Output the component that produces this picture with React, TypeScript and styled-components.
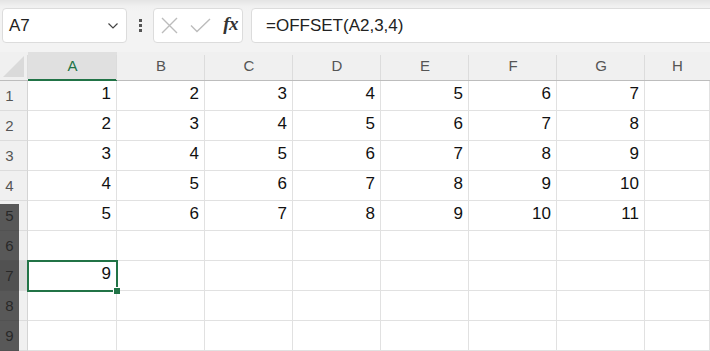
import React from 'react'
import styled, { createGlobalStyle, css } from 'styled-components'

const GlobalStyle = createGlobalStyle`
    html, body {
        margin: 0;
        padding: 0;
        background: #ffffff;
        overflow: hidden;
    }
    body {
        font-family: "Liberation Sans", Arial, sans-serif;
    }
`

const COLS = ['A', 'B', 'C', 'D', 'E', 'F', 'G', 'H']
const ROWS = 9
const SELECTED_COL = 0
const SELECTED_ROW = 7

const data: (number | null)[][] = [
    [1, 2, 3, 4, 5, 6, 7],
    [2, 3, 4, 5, 6, 7, 8],
    [3, 4, 5, 6, 7, 8, 9],
    [4, 5, 6, 7, 8, 9, 10],
    [5, 6, 7, 8, 9, 10, 11],
    [],
    [9],
    [],
    [],
]

const Page = styled.div`
    width: 710px;
    height: 351px;
    display: flex;
    flex-direction: column;
    overflow: hidden;
    position: relative;
    background: #f3f3f3;
`

const Toolbar = styled.div`
    height: 52px;
    box-sizing: border-box;
    padding: 8px 0 9px 2px;
    display: flex;
    align-items: stretch;
    background: linear-gradient(#e4e4e4 0px, #f0f0f0 6px, #f3f3f3 12px);
`

const Box = styled.div`
    background: #fff;
    border: 1px solid #dcdcdc;
    border-radius: 4px;
    box-sizing: border-box;
    display: flex;
    align-items: center;
`

const NameBox = styled(Box)`
    width: 125px;
    padding: 0 8px 0 6px;
    justify-content: space-between;
    font-size: 17px;
    color: #222;
`

const Dots = styled.div`
    width: 26px;
    display: flex;
    flex-direction: column;
    align-items: center;
    justify-content: center;
    gap: 2px;

    span {
        width: 3px;
        height: 3px;
        background: #555;
    }
`

const FxBox = styled(Box)`
    width: 90px;
    padding: 0 4px 0 7px;
    justify-content: space-between;
`

const FxLabel = styled.span`
    font-family: "Liberation Serif", "DejaVu Serif", serif;
    font-style: italic;
    font-weight: bold;
    font-size: 19px;
    color: #333;
    padding-bottom: 3px;
    letter-spacing: -0.5px;
`

const FormulaBox = styled(Box)`
    flex: 1;
    margin-left: 8px;
    margin-right: -10px;
    padding-left: 14px;
    font-size: 17px;
    color: #222;
`

const Grid = styled.div`
    flex: 1;
    display: grid;
    grid-template-columns: 28px 89px repeat(6, 88px) 1fr;
    grid-template-rows: 29px repeat(${ROWS}, 30px);
    background: #fff;
`

const Corner = styled.div`
    background: #f0f0f0;
    border-bottom: 1px solid #bdbdbd;
    position: relative;

    &::after {
        content: '';
        position: absolute;
        left: 3px;
        bottom: 3px;
        border-style: solid;
        border-width: 0 0 21px 21px;
        border-color: transparent transparent #dadada transparent;
    }
`

const ColHeader = styled.div<{ active?: boolean }>`
    background: #f0f0f0;
    border-bottom: 1px solid #bdbdbd;
    box-sizing: border-box;
    display: flex;
    align-items: center;
    justify-content: center;
    font-size: 15px;
    color: #555;
    padding-bottom: 2px;
    position: relative;

    &::before {
        content: '';
        position: absolute;
        left: -1px;
        top: 3px;
        bottom: 0;
        width: 1px;
        background: #dcdcdc;
    }

    ${p => p.active && css`
        background: #e0e0e0;
        color: #217346;
        border-bottom: 2px solid #217346;
        padding-bottom: 1px;
    `}
`

const RowHeader = styled.div<{ active?: boolean }>`
    background: ${p => p.active ? '#dadada' : '#f0f0f0'};
    border-right: 1px solid #d4d4d4;
    border-bottom: 1px solid #dcdcdc;
    box-sizing: border-box;
    display: flex;
    align-items: center;
    justify-content: center;
    font-size: 15px;
    color: #555;
    padding-right: 8px;
`

const Cell = styled.div<{ selected?: boolean }>`
    border-right: 1px solid #e1e1e1;
    border-bottom: 1px solid #e1e1e1;
    box-sizing: border-box;
    display: flex;
    align-items: flex-end;
    justify-content: flex-end;
    padding: 0 5px 6px 0;
    font-size: 17px;
    color: #111;
    position: relative;

    ${p => p.selected && css`
        outline: 2px solid #217346;
        outline-offset: -1px;
        z-index: 1;

        &::after {
            content: '';
            position: absolute;
            right: -4px;
            bottom: -4px;
            width: 6px;
            height: 6px;
            background: #217346;
            border: 1px solid #fff;
            border-width: 1px 0 0 1px;
        }
    `}
`

const ScrollShade = styled.div`
    position: absolute;
    left: 0;
    top: 204px;
    width: 19px;
    bottom: 0;
    background: rgba(23, 23, 23, 0.7);
    z-index: 2;
`

const XIcon = () => (
    <svg width="17" height="17" viewBox="0 0 17 17">
        <path d="M1 1 L16 16 M16 1 L1 16" stroke="#bcbcbc" strokeWidth="1.4" fill="none" />
    </svg>
)

const CheckIcon = () => (
    <svg width="21" height="15" viewBox="0 0 21 15">
        <path d="M1 7.5 L7 13.5 L20 1" stroke="#bcbcbc" strokeWidth="1.4" fill="none" />
    </svg>
)

const Chevron = () => (
    <svg width="10" height="6" viewBox="0 0 10 6">
        <path d="M0.5 0.5 L5 5 L9.5 0.5" stroke="#444" strokeWidth="1.2" fill="none" />
    </svg>
)

const App: React.FC = () => {
    return <Page>
        <GlobalStyle />
        <Toolbar>
            <NameBox>
                <span>A7</span>
                <Chevron />
            </NameBox>
            <Dots><span /><span /><span /></Dots>
            <FxBox>
                <XIcon />
                <CheckIcon />
                <FxLabel>fx</FxLabel>
            </FxBox>
            <FormulaBox>=OFFSET(A2,3,4)</FormulaBox>
        </Toolbar>
        <Grid>
            <Corner />
            {COLS.map((c, i) => <ColHeader key={c} active={i === SELECTED_COL}>{c}</ColHeader>)}
            {Array.from({ length: ROWS }, (_, r) => (
                <React.Fragment key={r}>
                    <RowHeader active={r + 1 === SELECTED_ROW}>{r + 1}</RowHeader>
                    {COLS.map((c, ci) => (
                        <Cell key={c} selected={r + 1 === SELECTED_ROW && ci === SELECTED_COL}>
                            {data[r][ci] ?? ''}
                        </Cell>
                    ))}
                </React.Fragment>
            ))}
        </Grid>
        <ScrollShade />
    </Page>
}

export default App
